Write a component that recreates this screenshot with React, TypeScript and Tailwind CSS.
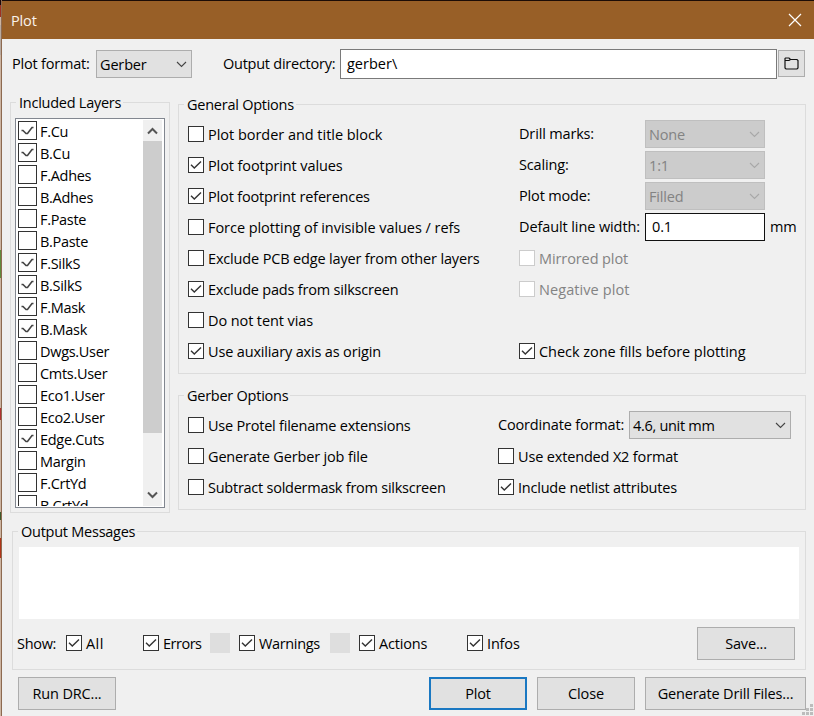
import type { ReactNode } from 'react';

function Tick({ className }: { className: string }) {
  return (
    <svg viewBox="0 0 14 14" className={className} fill="none" stroke="#333" strokeWidth="1.4">
      <path d="M2 6.8 L5.3 10.1 L12 3.4" />
    </svg>
  );
}

function Check({ label, on, disabled, className = '' }: { label: string; on?: boolean; disabled?: boolean; className?: string }) {
  return (
    <div className={`flex h-[31px] shrink-0 items-center pt-px whitespace-nowrap ${disabled ? 'text-[#838383]' : ''} ${className}`}>
      <span className={`flex size-4 shrink-0 items-center justify-center border bg-white ${disabled ? 'border-[#cccccc]' : 'border-[#333]'}`}>
        {on && <Tick className="size-[14px]" />}
      </span>
      <span className="ml-1 pt-[2px]">{label}</span>
    </div>
  );
}

function Chevron({ color, className = '' }: { color: string; className?: string }) {
  return (
    <svg viewBox="0 0 11 7" className={`h-[7px] w-[11px] ${className}`} fill="none" stroke={color} strokeWidth="1.1">
      <path d="M1 1 L5.5 5.5 L10 1" />
    </svg>
  );
}

function Select({ value, disabled, className }: { value: string; disabled?: boolean; className: string }) {
  return (
    <div
      className={`flex h-[28px] shrink-0 items-center justify-between border pr-[4px] pl-[3px] ${
        disabled ? 'border-[#bfbfbf] bg-[#cccccc] text-[#838383]' : 'border-[#adadad] bg-[#e1e1e1]'
      } ${className}`}
    >
      <span className="pt-[2px]">{value}</span>
      <Chevron color={disabled ? '#a8a8a8' : '#444'} />
    </div>
  );
}

function Group({ title, className, children }: { title: string; className: string; children: ReactNode }) {
  return (
    <section className={`flex shrink-0 flex-col border border-[#dcdcdc] ${className}`}>
      <h2 className="-mt-[12px] ml-[5px] h-[22px] self-start bg-[#f0f0f0] pr-[2px] pl-[3px] leading-[24px] tracking-[-0.25px]">{title}</h2>
      {children}
    </section>
  );
}

function Field({ label, labelWidth, children }: { label: string; labelWidth: string; children: ReactNode }) {
  return (
    <div className="flex h-[31px] items-center pt-px">
      <span className={labelWidth}>{label}</span>
      {children}
    </div>
  );
}

function Button({ label, className = '' }: { label: string; className?: string }) {
  return (
    <button className={`flex h-[33px] shrink-0 items-center justify-center bg-[#e1e1e1] whitespace-nowrap ${className}`}>
      {label}
    </button>
  );
}

const layers: [string, boolean][] = [
  ['F.Cu', true],
  ['B.Cu', true],
  ['F.Adhes', false],
  ['B.Adhes', false],
  ['F.Paste', false],
  ['B.Paste', false],
  ['F.SilkS', true],
  ['B.SilkS', true],
  ['F.Mask', true],
  ['B.Mask', true],
  ['Dwgs.User', false],
  ['Cmts.User', false],
  ['Eco1.User', false],
  ['Eco2.User', false],
  ['Edge.Cuts', true],
  ['Margin', false],
  ['F.CrtYd', false],
  ['B.CrtYd', false],
];

function LayerList() {
  return (
    <div className="mt-[5px] ml-[4px] flex h-[390px] w-[150px] border border-[#828790] bg-white py-px pr-[2px] pl-px">
      <div className="h-[386px] flex-1 overflow-hidden pl-px tracking-[-0.3px]">
        {layers.map(([name, on]) => (
          <div key={name} className="flex h-[22px] items-start pt-px">
            <span className="flex size-[19px] shrink-0 items-center justify-center border border-[#333] bg-white">
              {on && (
                <svg viewBox="0 0 17 17" className="size-[17px]" fill="none" stroke="#444" strokeWidth="1.6">
                  <path d="M2.5 8.5 H4 L7 11.5 H8.5 L13 5.5 H14.5" />
                </svg>
              )}
            </span>
            <span className="ml-[3px] leading-[22px]">{name}</span>
          </div>
        ))}
      </div>
      <div className="flex w-[19px] flex-col items-center bg-[#f0f0f0]">
        <div className="flex h-[21px] items-center">
          <svg viewBox="0 0 11 8" className="h-[8px] w-[11px]" fill="none" stroke="#555" strokeWidth="2">
            <path d="M1 6.5 L5.5 2 L10 6.5" />
          </svg>
        </div>
        <div className="h-[292px] w-full bg-[#cdcdcd]" />
        <div className="flex-1" />
        <div className="flex h-[22px] items-center">
          <svg viewBox="0 0 11 8" className="h-[8px] w-[11px]" fill="none" stroke="#555" strokeWidth="2">
            <path d="M1 1.5 L5.5 6 L10 1.5" />
          </svg>
        </div>
      </div>
    </div>
  );
}

function Backdrop() {
  return (
    <div className="flex w-[2px] shrink-0 flex-col border-r border-r-[#8d6a50] bg-[#cdb5a2]">
      <div className="h-[5px] bg-[#1a0808]" />
      <div className="h-[12px] bg-[#a03020]" />
      <div className="mt-[8px] h-[30px] bg-[#b8aaa0]" />
      <div className="mt-[195px] h-[28px] bg-[#5f8a3c]" />
      <div className="mt-[130px] h-[12px] bg-[#b03030]" />
      <div className="mt-[92px] h-[8px] bg-[#3c5a2c]" />
      <div className="mt-[18px] h-[20px] bg-[#b03418]" />
    </div>
  );
}

export default function App() {
  return (
    <div className="relative flex h-[716px] w-[814px] overflow-hidden bg-[#f0f0f0] font-['Open_Sans','Noto_Sans',sans-serif] text-[14.5px] leading-[20px] tracking-[-0.16px] text-black">
      <Backdrop />
      <main className="flex flex-1 flex-col">
        <header className="flex h-[39px] shrink-0 items-center justify-between border-t border-[#1c0c06] bg-[#985f27] pr-[12px] pl-[9px] text-[#faf3ec]">
          <span className="pt-px">Plot</span>
          <svg viewBox="0 0 14 14" className="size-[14px]" fill="none" stroke="#fff" strokeWidth="1.2">
            <path d="M1 1 L13 13 M13 1 L1 13" />
          </svg>
        </header>

        <div className="mt-[10px] flex h-[30px] shrink-0 items-center pl-[10px] whitespace-nowrap">
          <span className="w-[84px] tracking-[-0.2px]">Plot format:</span>
          <Select value="Gerber" className="w-[96px]" />
          <span className="ml-[31px] w-[117px] tracking-[-0.25px]">Output directory:</span>
          <div className="flex h-[30px] w-[437px] items-center border border-[#7a7a7a] bg-white pb-px pl-[6px] tracking-[0px]">gerber\</div>
          <button className="mt-px ml-px flex h-[27px] w-[27px] items-center justify-center self-start border border-[#adadad] bg-[#e1e1e1]">
            <svg viewBox="0 0 15 13" className="h-[13px] w-[15px]" fill="none" stroke="#111" strokeWidth="1.2">
              <path d="M1 11 V1.5 L1.5 1 H5 L6.5 2.5 H13 L14 3.5 V11 L13 12 H2 Z M1 3.5 H5 L6.5 2.5" />
            </svg>
          </button>
        </div>

        <div className="flex h-[434px] shrink-0 pl-[8px]">
          <Group title="Included Layers" className="mt-[23px] h-[411px] w-[160px]">
            <LayerList />
          </Group>

          <div className="ml-[8px] flex flex-col pt-[25px]">
            <Group title="General Options" className="h-[270px] w-[628px]">
              <div className="mt-[3px] flex">
                <div className="w-[340px] pl-[9px]">
                  <Check label="Plot border and title block" className="tracking-[-0.03px]" />
                  <Check label="Plot footprint values" on className="tracking-[-0.1px]" />
                  <Check label="Plot footprint references" on />
                  <Check label="Force plotting of invisible values / refs" className="tracking-[-0.05px]" />
                  <Check label="Exclude PCB edge layer from other layers" />
                  <Check label="Exclude pads from silkscreen" on className="tracking-[-0.2px]" />
                  <Check label="Do not tent vias" className="tracking-[-0.1px]" />
                  <Check label="Use auxiliary axis as origin" on />
                </div>
                <div className="whitespace-nowrap">
                  <Field label="Drill marks:" labelWidth="w-[126px]">
                    <Select value="None" disabled className="w-[120px]" />
                  </Field>
                  <Field label="Scaling:" labelWidth="w-[126px]">
                    <Select value="1:1" disabled className="w-[120px]" />
                  </Field>
                  <Field label="Plot mode:" labelWidth="w-[126px]">
                    <Select value="Filled" disabled className="w-[120px]" />
                  </Field>
                  <Field label="Default line width:" labelWidth="w-[126px] tracking-[-0.1px]">
                    <div className="flex h-[28px] w-[120px] items-center border border-[#111] bg-white pb-px pl-[6px]">0.1</div>
                    <span className="ml-[5px]">mm</span>
                  </Field>
                  <Check label="Mirrored plot" disabled className="tracking-[-0.1px]" />
                  <Check label="Negative plot" disabled className="tracking-[0.08px]" />
                  <Check label="Check zone fills before plotting" on className="mt-[31px] tracking-[-0.04px]" />
                </div>
              </div>
            </Group>

            <Group title="Gerber Options" className="mt-[21px] h-[115px] w-[628px]">
              <div className="mt-[3px] flex">
                <div className="w-[319px] pl-[9px]">
                  <Check label="Use Protel filename extensions" className="tracking-[-0.22px]" />
                  <Check label="Generate Gerber job file" />
                  <Check label="Subtract soldermask from silkscreen" className="tracking-[-0.25px]" />
                </div>
                <div className="whitespace-nowrap">
                  <Field label="Coordinate format:" labelWidth="w-[131px]">
                    <Select value="4.6, unit mm" className="w-[162px] tracking-[-0.3px]" />
                  </Field>
                  <Check label="Use extended X2 format" />
                  <Check label="Include netlist attributes" on className="tracking-[-0.22px]" />
                </div>
              </div>
            </Group>
          </div>
        </div>

        <Group title="Output Messages" className="mt-[18px] ml-[10px] h-[139px] w-[794px]">
          <div className="mt-[5px] ml-[6px] h-[72px] w-[780px] shrink-0 bg-white" />
          <div className="mt-[8px] flex h-[33px] shrink-0 items-center pl-[4px]">
            <span className="w-[49px] tracking-[-0.3px]">Show:</span>
            <Check label="All" on className="-mt-[2px] w-[77px] tracking-[0.4px]" />
            <Check label="Errors" on className="-mt-[2px] w-[67px] tracking-[-0.5px]" />
            <span className="-mt-px mr-[9px] size-[20px] bg-[#dedede]" />
            <Check label="Warnings" on className="-mt-[2px] w-[91px] tracking-[-0.35px]" />
            <span className="-mt-px mr-[9px] size-[20px] bg-[#dedede]" />
            <Check label="Actions" on className="-mt-[2px] w-[108px]" />
            <Check label="Infos" on className="-mt-[2px] w-[230px]" />
            <Button label="Save..." className="w-[98px] border border-[#adadad]" />
          </div>
        </Group>

        <footer className="mt-[7px] flex h-[33px] shrink-0 pl-[16px]">
          <Button label="Run DRC..." className="w-[98px] border border-[#adadad]" />
          <Button label="Plot" className="ml-[313px] w-[98px] border-2 border-[#1a78c2]" />
          <Button label="Close" className="ml-[10px] w-[98px] border border-[#adadad]" />
          <Button label="Generate Drill Files..." className="ml-[10px] w-[161px] border border-[#adadad]" />
        </footer>
      </main>
      <svg viewBox="0 0 12 12" className="absolute right-[1px] bottom-[1px] size-[12px]" fill="#bcbcbc">
        <path d="M9 1h3v3H9z M5 5h3v3H5z M9 5h3v3H9z M1 9h3v3H1z M5 9h3v3H5z M9 9h3v3H9z" />
      </svg>
    </div>
  );
}
